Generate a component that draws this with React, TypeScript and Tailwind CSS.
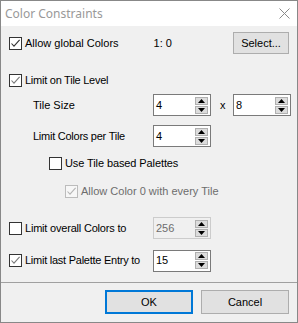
import React from "react";

const font = { fontFamily: '"Liberation Sans", Arial, sans-serif' };

function Check({ checked, dark, disabled }: { checked?: boolean; dark?: boolean; disabled?: boolean }) {
  const stroke = disabled ? "#b5b5b5" : dark ? "#333333" : "#7a7a7a";
  return (
    <span
      className={
        disabled
          ? "w-[13px] h-[13px] border border-[#bcbcbc] bg-[#f7f7f7] flex items-center justify-center shrink-0"
          : "w-[13px] h-[13px] border border-[#333333] bg-white flex items-center justify-center shrink-0"
      }
    >
      {checked && (
        <svg width="11" height="11" viewBox="0 0 11 11">
          <path d="M1.5 5.5 L4 8.2 L9.6 1.8" stroke={stroke} strokeWidth="1.1" fill="none" />
        </svg>
      )}
    </span>
  );
}

function SpinBtn({ up }: { up?: boolean }) {
  return (
    <span className="w-[13px] h-[8px] bg-[#dcdcdc] border border-[#b0b0b0] flex items-center justify-center">
      <svg width="7" height="4" viewBox="0 0 7 4">
        {up ? <path d="M0 4 L3.5 0 L7 4 Z" fill="#000" /> : <path d="M0 0 L3.5 4 L7 0 Z" fill="#000" />}
      </svg>
    </span>
  );
}

function Spin({ value, disabled }: { value: string; disabled?: boolean }) {
  return (
    <div
      className={
        disabled
          ? "w-[58px] h-[22px] border border-[#cccccc] bg-[#f0f0f0] text-[#6d6d6d] flex items-center pl-[2px] shrink-0"
          : "w-[58px] h-[22px] border border-[#7a7a7a] bg-white text-black flex items-center pl-[2px] shrink-0"
      }
    >
      <span>{value}</span>
      <div className="ml-auto mr-[2px] flex flex-col gap-[1px]">
        <SpinBtn up />
        <SpinBtn />
      </div>
    </div>
  );
}

export default function App() {
  return (
    <div
      className="w-[298px] h-[323px] border border-[#888888] bg-[#f0f0f0] flex flex-col text-[11px] text-black leading-none"
      style={font}
    >
      {/* Title bar */}
      <div className="h-[25px] bg-white flex items-center pl-[4px] pr-[7px] shrink-0">
        <span className="text-[12px] text-[#999999]" style={{ fontFamily: '"Noto Sans", sans-serif' }}>
          Color Constraints
        </span>
        <svg className="ml-auto" width="11" height="11" viewBox="0 0 11 11">
          <path d="M0.5 0.5 L10.5 10.5 M10.5 0.5 L0.5 10.5" stroke="#8a8a8a" strokeWidth="1" />
        </svg>
      </div>

      <div className="flex flex-col pl-[8px]">
        {/* Row 1 */}
        <div className="mt-[6px] h-[22px] flex items-center">
          <Check checked dark />
          <span className="ml-[3px]">Allow global Colors</span>
          <span className="ml-[35px]">1: 0</span>
          <button className="ml-auto mr-[8px] w-[56px] h-[22px] bg-[#e1e1e1] border border-[#adadad] flex items-center justify-center">
            Select...
          </button>
        </div>

        {/* Row 2 */}
        <div className="mt-[15px] h-[22px] flex items-center">
          <Check checked />
          <span className="ml-[3px] tracking-[-0.25px]">Limit on Tile Level</span>
        </div>

        {/* Tile Size */}
        <div className="mt-[3px] h-[22px] flex items-center">
          <span className="ml-[24px] w-[120px]">Tile Size</span>
          <Spin value="4" />
          <span className="ml-[9px] w-[13px]">x</span>
          <Spin value="8" />
        </div>

        {/* Limit colors per tile */}
        <div className="mt-[9px] h-[22px] flex items-center">
          <span className="ml-[24px] w-[120px] tracking-[-0.25px]">Limit Colors per Tile</span>
          <Spin value="4" />
        </div>

        {/* Use tile based palettes */}
        <div className="mt-[5px] h-[22px] flex items-center pl-[40px]">
          <Check />
          <span className="ml-[3px] tracking-[-0.1px]">Use Tile based Palettes</span>
        </div>

        {/* Allow color 0 */}
        <div className="mt-[6px] h-[22px] flex items-center pl-[56px]">
          <Check checked disabled />
          <span className="ml-[3px] text-[#6d6d6d]">Allow Color 0 with every Tile</span>
        </div>

        {/* Limit overall */}
        <div className="mt-[15px] h-[22px] flex items-center">
          <Check />
          <span className="ml-[3px] w-[128px] tracking-[-0.2px]">Limit overall Colors to</span>
          <Spin value="256" disabled />
        </div>

        {/* Limit last */}
        <div className="mt-[10px] h-[23px] flex items-center">
          <Check checked />
          <span className="ml-[3px] w-[128px] tracking-[-0.25px]">Limit last Palette Entry to</span>
          <Spin value="15" />
        </div>
      </div>

      <div className="mt-[10px] border-t border-[#a0a0a0]" />

      <div className="mt-[7px] flex justify-end gap-[8px] pr-[8px]">
        <button className="w-[88px] h-[24px] bg-[#e1e1e1] border-2 border-[#0078d7] flex items-center justify-center">
          OK
        </button>
        <button className="w-[88px] h-[24px] bg-[#e1e1e1] border border-[#adadad] flex items-center justify-center">
          Cancel
        </button>
      </div>
    </div>
  );
}
